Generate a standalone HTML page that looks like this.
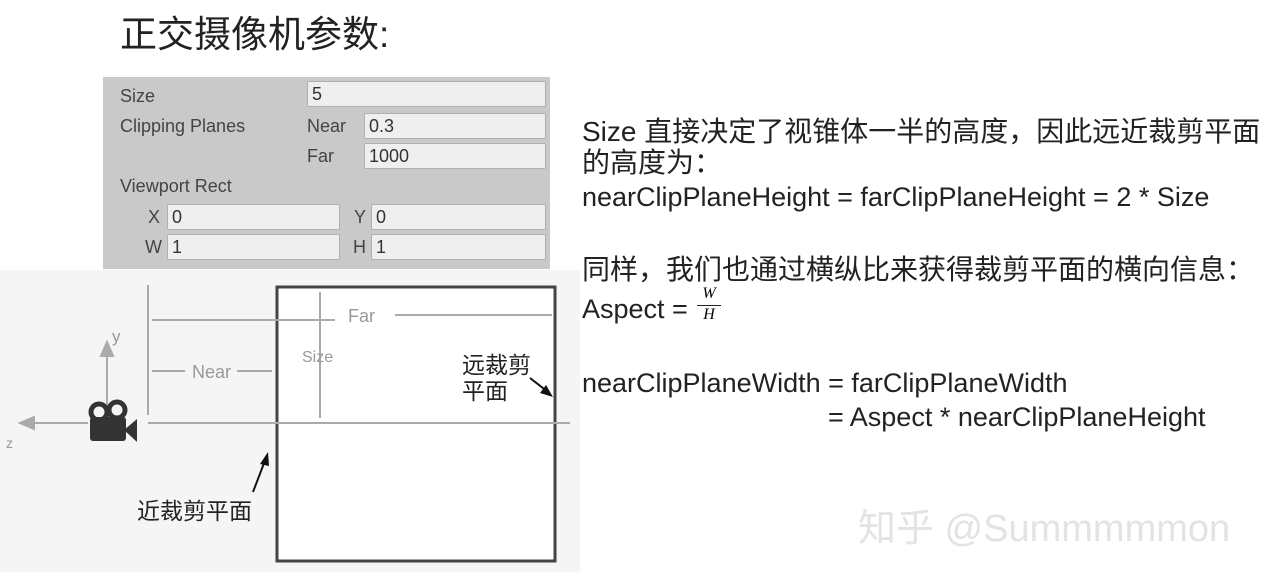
<!DOCTYPE html>
<html><head><meta charset="utf-8"><style>
body{margin:0;width:1280px;height:572px;background:#fff;position:relative;overflow:hidden;font-family:"Liberation Sans","Noto Sans CJK SC",sans-serif;}
.a{position:absolute;white-space:nowrap}
.panel{position:absolute;left:103px;top:77px;width:447px;height:192px;background:#c9c9c9;}
.f{position:absolute;background:#efefef;border:1px solid #b0b0b0;border-radius:2px;font-size:18px;color:#333;line-height:24px;padding-left:4px;box-sizing:border-box;height:26px}
.l{position:absolute;font-size:18px;color:#444}
.t{font-size:27px;color:#222}
.c{font-size:28px;color:#222}
</style></head><body>
<div class="a" style="left:120px;top:4px;font-size:37px;color:#222">正交摄像机参数:</div>
<div class="panel">
<div class="l" style="left:17px;top:9px">Size</div>
<div class="f" style="left:204px;top:4px;width:239px">5</div>
<div class="l" style="left:17px;top:39px">Clipping Planes</div>
<div class="l" style="left:204px;top:39px">Near</div>
<div class="f" style="left:261px;top:36px;width:182px">0.3</div>
<div class="l" style="left:204px;top:69px">Far</div>
<div class="f" style="left:261px;top:66px;width:182px">1000</div>
<div class="l" style="left:17px;top:99px">Viewport Rect</div>
<div class="l" style="left:45px;top:130px">X</div>
<div class="f" style="left:64px;top:127px;width:173px">0</div>
<div class="l" style="left:251px;top:130px">Y</div>
<div class="f" style="left:268px;top:127px;width:175px">0</div>
<div class="l" style="left:42px;top:160px">W</div>
<div class="f" style="left:64px;top:157px;width:173px">1</div>
<div class="l" style="left:250px;top:160px">H</div>
<div class="f" style="left:268px;top:157px;width:175px">1</div>
</div>
<svg class="a" style="left:0;top:270px" width="580" height="302">
<rect x="0" y="0" width="580" height="302" fill="#f5f5f5"/>
<rect x="277" y="17" width="278" height="274" fill="#fff" stroke="#444" stroke-width="3"/>
<g stroke="#aaa" stroke-width="2" fill="#aaa">
<line x1="148" y1="15" x2="148" y2="145"/>
<line x1="152" y1="50" x2="335" y2="50"/><line x1="395" y1="45" x2="552" y2="45"/>
<line x1="152" y1="101" x2="185" y2="101"/><line x1="237" y1="101" x2="272" y2="101"/>
<line x1="320" y1="22" x2="320" y2="148"/>
<line x1="148" y1="153" x2="570" y2="153"/>
<line x1="88" y1="153" x2="25" y2="153"/>
<line x1="107" y1="150" x2="107" y2="78"/>
<polygon points="107,72 101,86 113,86"/><polygon points="20,153 34,147 34,159"/>
</g>
<text x="192" y="108" font-size="18" fill="#999" font-family="Liberation Sans">Near</text>
<text x="348" y="52" font-size="18" fill="#999" font-family="Liberation Sans">Far</text>
<text x="302" y="92" font-size="16" fill="#999" font-family="Liberation Sans">Size</text>
<text x="112" y="72" font-size="17" fill="#999" font-family="Liberation Sans">y</text>
<text x="6" y="178" font-size="14" fill="#999" font-family="Liberation Sans">z</text>
<circle cx="99" cy="142" r="8" fill="none" stroke="#333" stroke-width="5"/>
<circle cx="117" cy="140" r="8" fill="none" stroke="#333" stroke-width="5"/>
<rect x="90" y="147" width="36" height="24" rx="3" fill="#333"/>
<polygon points="124,160 137,149 137,172" fill="#333"/>
<line x1="253" y1="222" x2="266" y2="188" stroke="#111" stroke-width="2"/>
<polygon points="268,182 260,194 269,196" fill="#111"/>
<line x1="530" y1="108" x2="548" y2="122" stroke="#111" stroke-width="2"/>
<polygon points="553,127 540,123 546,115" fill="#111"/>
<text x="137" y="249" font-size="23" fill="#222" font-family="Noto Sans CJK SC">近裁剪平面</text>
<text x="462" y="103" font-size="23" fill="#222" font-family="Noto Sans CJK SC">远裁剪</text>
<text x="462" y="129" font-size="23" fill="#222" font-family="Noto Sans CJK SC">平面</text>
</svg>
<div class="a c" style="left:582px;top:110px">Size 直接决定了视锥体一半的高度，因此远近裁剪平面</div>
<div class="a c" style="left:582px;top:141px">的高度为：</div>
<div class="a t" style="left:582px;top:182px">nearClipPlaneHeight = farClipPlaneHeight = 2 * Size</div>
<div class="a c" style="left:582px;top:248px">同样，我们也通过横纵比来获得裁剪平面的横向信息：</div>
<div class="a t" style="left:582px;top:294px">Aspect =</div>
<div class="a" style="left:697px;top:285px;font-size:16px;font-style:italic;font-family:'Liberation Serif',serif;width:24px;text-align:center;line-height:18px">W<div style="border-top:1.5px solid #222;margin-top:2px">H</div></div>
<div class="a t" style="left:582px;top:368px">nearClipPlaneWidth = farClipPlaneWidth</div>
<div class="a t" style="left:828px;top:402px">= Aspect * nearClipPlaneHeight</div>
<div class="a" style="left:858px;top:497px;font-size:38px;color:#e3e3e3">知乎 @Summmmmon</div>
</body></html>
